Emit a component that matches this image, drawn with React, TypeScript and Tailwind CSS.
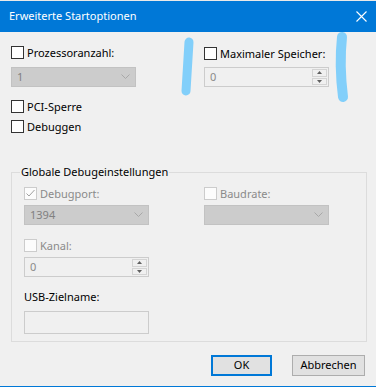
import type {ReactNode} from "react";

const font = {fontFamily: '"Noto Sans", "Liberation Sans", sans-serif'};

const Check = ({label, checked, disabled}: {label: string; checked?: boolean; disabled?: boolean}) => (
    <div className="flex items-center h-[13px]">
        <div
            className={
                disabled
                    ? "w-[13px] h-[13px] border border-[#cccccc] bg-[#fcfcfc] flex items-center justify-center"
                    : "w-[13px] h-[13px] border border-[#333333] bg-white"
            }
        >
            {checked && (
                <svg width="11" height="11" viewBox="0 0 11 11">
                    <path d="M1.5 5.5 L4 8 L9.5 2" fill="none" stroke="#a0a0a0" strokeWidth="1" />
                </svg>
            )}
        </div>
        <span className={"ml-[3px] text-[11px] leading-[13px] " + (disabled ? "text-[#8a8a8a]" : "text-black")}>
            {label}
        </span>
    </div>
);

const Combo = ({value}: {value?: string}) => (
    <div className="w-[125px] h-[20px] bg-[#cccccc] border border-[#c2c2c2] flex items-center justify-between pl-[5px] pr-[5px]">
        <span className="text-[11px] text-[#808080]">{value}</span>
        <svg width="9" height="6" viewBox="0 0 9 6">
            <path d="M0.5 0.5 L4.5 4.5 L8.5 0.5" fill="none" stroke="#a8a8a8" strokeWidth="1" />
        </svg>
    </div>
);

const Spin = ({value}: {value: string}) => (
    <div className="w-[125px] h-[20px] bg-[#f0f0f0] border border-[#cccccc] flex items-center justify-between pl-[5px] pr-[1px]">
        <span className="text-[11px] text-[#8a8a8a]">{value}</span>
        <div className="flex flex-col w-[15px] h-[16px] gap-[1px]">
            <div className="flex-1 border border-[#d4d4d4] flex items-center justify-center">
                <svg width="5" height="3" viewBox="0 0 5 3"><path d="M0 3 L2.5 0 L5 3 Z" fill="#606060" /></svg>
            </div>
            <div className="flex-1 border border-[#d4d4d4] flex items-center justify-center">
                <svg width="5" height="3" viewBox="0 0 5 3"><path d="M0 0 L2.5 3 L5 0 Z" fill="#606060" /></svg>
            </div>
        </div>
    </div>
);

const Btn = ({children, primary}: {children: ReactNode; primary?: boolean}) => (
    <div
        className={
            "h-[21px] bg-[#e1e1e1] flex items-center justify-center text-[11px] text-black " +
            (primary ? "w-[61px] border-2 border-[#0078d7]" : "w-[73px] border border-[#adadad]")
        }
    >
        {children}
    </div>
);

export default function App() {
    return (
        <div className="relative w-[376px] h-[387px] bg-[#f0f0f0] flex flex-col border-b border-[#0078d7]" style={font}>
            <div className="h-[1px] bg-[#e9e9e9]" />
            <div className="h-[31px] bg-[#0078d7] flex items-center justify-between pl-[9px] pr-[9px] text-white text-[11px]">
                <span>Erweiterte Startoptionen</span>
                <svg width="11" height="11" viewBox="0 0 11 11">
                    <path d="M0.5 0.5 L10.5 10.5 M10.5 0.5 L0.5 10.5" stroke="white" strokeWidth="1.1" />
                </svg>
            </div>

            <div className="flex flex-col pl-[11px] pr-[9px] pt-[14px]">
                <div className="flex">
                    <div className="w-[193px] flex flex-col gap-[8px]">
                        <Check label="Prozessoranzahl:" />
                        <Combo value="1" />
                    </div>
                    <div className="flex flex-col gap-[7px] pt-[1px]">
                        <Check label="Maximaler Speicher:" />
                        <Spin value="0" />
                    </div>
                </div>

                <div className="mt-[13px] flex flex-col gap-[7px]">
                    <Check label="PCI-Sperre" />
                    <Check label="Debuggen" />
                </div>

                <div className="relative mt-[39px] border border-[#dcdcdc] pl-[12px] pt-[14px] pb-[7px] w-[356px]">
                    <span className="absolute -top-[9px] left-[8px] px-[1px] bg-[#f0f0f0] text-[11px] text-black">
                        Globale Debugeinstellungen
                    </span>
                    <div className="flex">
                        <div className="w-[180px] flex flex-col gap-[5px]">
                            <Check label="Debugport:" checked disabled />
                            <Combo value="1394" />
                        </div>
                        <div className="flex flex-col gap-[5px]">
                            <Check label="Baudrate:" disabled />
                            <Combo />
                        </div>
                    </div>
                    <div className="mt-[14px] flex flex-col gap-[5px]">
                        <Check label="Kanal:" disabled />
                        <Spin value="0" />
                    </div>
                    <div className="mt-[12px] text-[11px] text-black leading-[16px]">USB-Zielname:</div>
                    <div className="mt-[6px] w-[125px] h-[23px] border border-[#cccccc] bg-[#f0f0f0]" />
                </div>

                <div className="mt-[13px] flex justify-end gap-[20px] pr-[2px]">
                    <Btn primary>OK</Btn>
                    <Btn>Abbrechen</Btn>
                </div>
            </div>

            <svg className="absolute left-0 top-0 pointer-events-none" width="376" height="387">
                <path d="M189 42 L186 91" stroke="#82cffa" strokeWidth="9" strokeLinecap="round" fill="none" />
                <path d="M342 37 Q339 65 343 97" stroke="#82cffa" strokeWidth="10" strokeLinecap="round" fill="none" />
            </svg>
        </div>
    );
}
